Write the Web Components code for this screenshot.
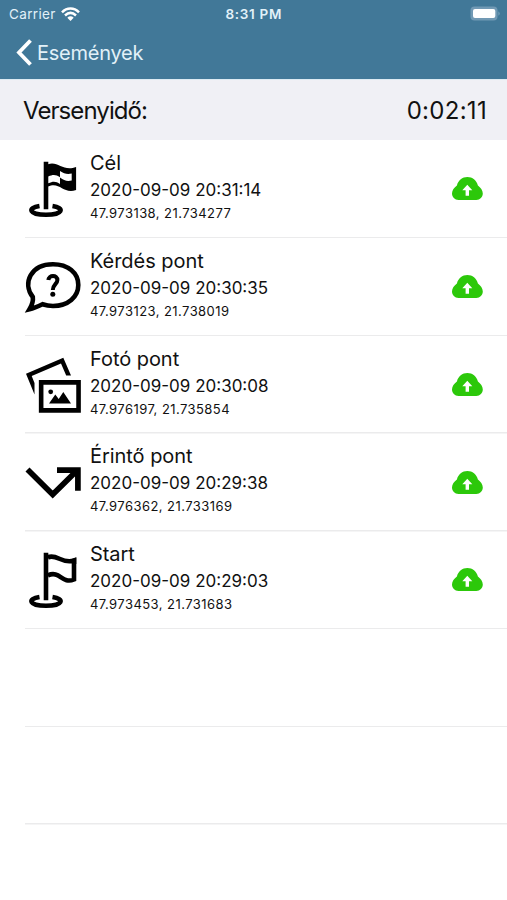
<!DOCTYPE html>
<html lang="hu">
<head>
<meta charset="utf-8">
<meta name="viewport" content="width=device-width, initial-scale=1">
<title>Események</title>
<style>
  body {
    margin: 0;
    background: #fff;
    color: #111;
    font-family: Inter, "Liberation Sans", sans-serif;
  }
</style>
</head>
<body>
<event-screen>
  <status-bar slot="top" carrier="Carrier" time="8:31 PM"></status-bar>
  <nav-bar slot="top">Események</nav-bar>
  <race-time slot="top" value="0:02:11">Versenyidő:</race-time>
  <event-row icon="finish" date="2020-09-09 20:31:14" coords="47.973138, 21.734277">Cél</event-row>
  <event-row icon="question" date="2020-09-09 20:30:35" coords="47.973123, 21.738019">Kérdés pont</event-row>
  <event-row icon="photo" date="2020-09-09 20:30:08" coords="47.976197, 21.735854">Fotó pont</event-row>
  <event-row icon="touch" date="2020-09-09 20:29:38" coords="47.976362, 21.733169">Érintő pont</event-row>
  <event-row icon="start" date="2020-09-09 20:29:03" coords="47.973453, 21.731683">Start</event-row>
  <event-row></event-row>
  <event-row></event-row>
</event-screen>

<script>
  const ICONS = {
    start: `
      <path d="M22 1.7V49.3M24 6.3C33 2.5 38 13.5 50 9.5V28.5C38 33.5 36 19 24 24.3M15.5 46C3 48 5 54.8 22 54.8S41 48 28.5 46"/>
      <path class="solid" d="M48 8l4.3-1.5V13h-4z"/>`,
    finish: `
      <path d="M22 1.7V49.3M15.5 46C3 48 5 54.8 22 54.8S41 48 28.5 46"/>
      <path class="solid" d="M24 4.2C34 .5 39 12 52.1 7V30C39 34.5 36 21 24 26.5z"/>
      <path class="hole" d="M24.3 16.5C29 14.3 32 14.5 36 17.3V11C40 13.5 43 14.5 47.7 13.5V20.5C43 21.5 40 20.5 36 17.5V24C32 21 29 21 24.3 23.2z"/>`,
    question: `
      <path d="M8.8 39C-2 25 7 6.2 29 6.2C44 6.2 54.3 15 54.3 27S44 48 29 48C25 48 21.5 47.3 18.5 46.3C14 48.5 10 50.3 5.5 51.3C7.5 48 9.5 44 8.8 39z"/>
      <path d="M24.3 22C24.8 16.6 33.4 16.6 33.4 22C33.4 26 28.8 26.5 28.8 32" stroke-width="4"/>
      <circle class="solid" cx="28.8" cy="36.3" r="2.5"/>`,
    photo: `
      <path class="solid" d="M10.5 38.5L2 17.8L39.3 1.8L47 19.5H42.2L37 7.4L7.7 20.1L10.5 27z"/>
      <path d="M17.15 26.35H54.55V54.35H17.15z"/>
      <path class="solid" d="M25 47.5L31.3 38.5L34.7 43L39.3 36L47 47.5z"/>
      <circle class="solid" cx="26.7" cy="35.8" r="2.4"/>`,
    touch: `
      <path class="wide" d="M3.5 15.5L28.7 40.5L53 16.5M33 16.2H53.9V36.8"/>`
  };

  class EventScreen extends HTMLElement {
    constructor() {
      super();
      this.attachShadow({ mode: "open" });
      this.shadowRoot.innerHTML = `
        <style>
          :host { display: flex; flex-direction: column; height: 900px; overflow: hidden; }
          header, main { display: flex; flex-direction: column; }
          main { padding-top: 0.5px; }
        </style>
        <header><slot name="top"></slot></header>
        <main><slot></slot></main>
      `;
    }
  }

  class StatusBar extends HTMLElement {
    connectedCallback() {
      this.attachShadow({ mode: "open" });
      this.shadowRoot.innerHTML = `
        <style>
          :host {
            display: grid;
            grid-template-columns: 1fr auto 1fr;
            align-items: center;
            height: 27px;
            padding: 0 6px 0 9px;
            background: #417898;
            color: #e2f1f8;
            font-size: 13.5px;
          }
          .left { display: flex; align-items: center; gap: 5px; letter-spacing: 0.35px; }
          .time { font-weight: 600; letter-spacing: 0.7px; margin-left: -2.5px; }
          .battery { justify-self: end; }
          svg { display: block; }
        </style>
        <div class="left">
          <span>${this.getAttribute("carrier")}</span>
          <svg width="19" height="14" viewBox="0 0 19 14" fill="none" stroke="#fff" stroke-width="2.5">
            <path d="M1 5.3C6 .2 13 .2 18 5.3M4 8.5C7.5 5.2 11.5 5.2 15 8.5"/>
            <path d="M6.3 10.7Q9.5 8 12.7 10.7L9.5 14z" fill="#fff" stroke="none"/>
          </svg>
        </div>
        <span class="time">${this.getAttribute("time")}</span>
        <svg class="battery" width="31" height="15" viewBox="0 0 31 15">
          <rect x="0.5" y="0.5" width="27" height="14" rx="4" fill="#7199b4"/>
          <rect x="3" y="3" width="22.3" height="9" rx="2" fill="#fff"/>
          <path d="M28.5 5.2q2.2 2.3 0 4.6z" fill="#84a9c2"/>
        </svg>
      `;
    }
  }

  class NavBar extends HTMLElement {
    constructor() {
      super();
      this.attachShadow({ mode: "open" });
      this.shadowRoot.innerHTML = `
        <style>
          :host {
            display: flex;
            align-items: center;
            gap: 4px;
            box-sizing: border-box;
            height: 52px;
            padding: 0 0 1px 16px;
            background: #417898;
            color: #e2f1f8;
            font-size: 20px;
            letter-spacing: -0.25px;
          }
        </style>
        <svg width="17" height="27" viewBox="0 0 17 27" fill="none" stroke="#fff" stroke-width="3.8">
          <path d="M14.5 1.5L3 13.5L14.5 25.5"/>
        </svg>
        <span><slot></slot></span>
      `;
    }
  }

  class RaceTime extends HTMLElement {
    connectedCallback() {
      this.attachShadow({ mode: "open" });
      this.shadowRoot.innerHTML = `
        <style>
          :host {
            display: flex;
            align-items: center;
            justify-content: space-between;
            box-sizing: border-box;
            height: 61px;
            padding: 0 20px 0 23px;
            border-top: 1px solid #dcebf3;
            background: #f0f0f5;
            font-size: 24px;
          }
          .label { letter-spacing: -0.92px; }
          .value { letter-spacing: 0.3px; }
        </style>
        <span class="label"><slot></slot></span>
        <span class="value">${this.getAttribute("value")}</span>
      `;
    }
  }

  class EventRow extends HTMLElement {
    connectedCallback() {
      const icon = ICONS[this.getAttribute("icon")];

      // rows without an icon only draw the separator
      const content = icon
        ? `<svg class="icon" width="58" height="58" viewBox="0 0 58 58">${icon}</svg>
           <div class="text">
             <div class="title"><slot></slot></div>
             <div class="date">${this.getAttribute("date")}</div>
             <div class="coords">${this.getAttribute("coords")}</div>
           </div>
           <upload-badge></upload-badge>`
        : "";

      this.attachShadow({ mode: "open" });
      this.shadowRoot.innerHTML = `
        <style>
          :host { display: block; height: 97.75px; padding-left: 24px; }
          .row {
            display: flex;
            align-items: center;
            box-sizing: border-box;
            height: 100%;
            padding-right: 24px;
            background: linear-gradient(#ebebec, #ebebec) 1px 100% / 100% 1.5px no-repeat;
          }
          .icon { flex: none; fill: none; stroke: #000; stroke-width: 4.6; }
          .icon .wide { stroke-width: 5.7; }
          .icon .solid { fill: #000; stroke: none; }
          .icon .hole { fill: #fff; stroke: none; }
          .text { flex: 1; padding: 0 0 5.6px 8px; white-space: nowrap; }
          .title { font-size: 20px; line-height: 28px; letter-spacing: -0.05px; }
          .date { font-size: 17px; line-height: 26px; }
          .coords { font-size: 13px; line-height: 21px; letter-spacing: 0.44px; }
        </style>
        <div class="row">${content}</div>
      `;
    }
  }

  class UploadBadge extends HTMLElement {
    constructor() {
      super();
      this.attachShadow({ mode: "open" });
      this.shadowRoot.innerHTML = `
        <style>
          :host { display: block; flex: none; margin-top: -1px; }
          svg { display: block; }
        </style>
        <svg width="31" height="23" viewBox="0 0 31 23">
          <path fill="#2cc80a" d="M6.5 23C2.8 23 0 20.2 0 16.6C0 13 2.2 10.5 4.9 8.4C6.3 3.2 10.3 0 15.4 0S24.5 3.2 25.9 8.4C28.6 10.5 30.8 13 30.8 16.6C30.8 20.2 28 23 24.3 23z"/>
          <path fill="#fff" d="M15.3 7.8L20.3 13.3H17V18.7H13.6V13.3H10.3z"/>
        </svg>
      `;
    }
  }

  customElements.define("event-screen", EventScreen);
  customElements.define("status-bar", StatusBar);
  customElements.define("nav-bar", NavBar);
  customElements.define("race-time", RaceTime);
  customElements.define("upload-badge", UploadBadge);
  customElements.define("event-row", EventRow);
</script>
</body>
</html>
